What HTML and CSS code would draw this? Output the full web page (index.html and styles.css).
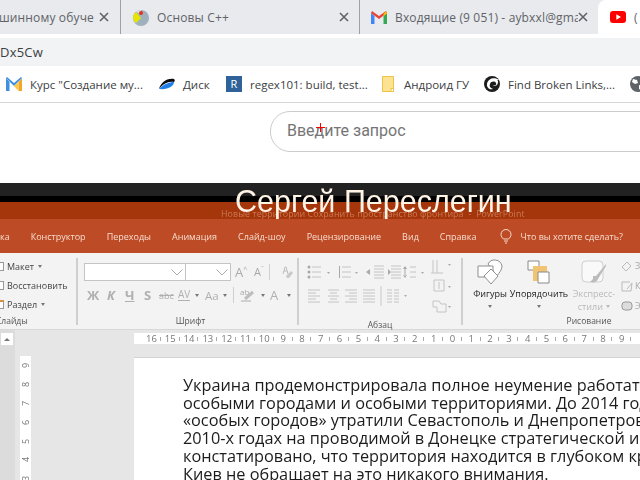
FILE: index.html
```html
<!DOCTYPE html>
<html lang="ru">
<head>
    <meta charset="UTF-8">
    <title>Сергей Переслегин</title>
    <link rel="stylesheet" href="styles.css">
</head>
<body>
<div class="tabstrip">
    <div class="tab tab-first">
        <span class="tab-title">шинному обучен</span>
        <svg class="tab-close" width="10" height="10" viewBox="0 0 10 10"><path d="M1 1l8 8M9 1l-8 8"/></svg>
    </div>
    <div class="tab tab-wide">
        <svg class="fav" width="17" height="17" viewBox="0 0 17 17"><circle cx="9" cy="9" r="8" fill="#9fb1bd"/><path d="M1 9a8 8 0 0 1 3-6l5 6-5 5a8 8 0 0 1-3-5z" fill="#e6e600"/><path d="M4 3a8 8 0 0 1 5-2v4z" fill="#dfe3e6"/><circle cx="9" cy="4" r="2" fill="#e8331c"/></svg>
        <span class="tab-title">Основы С++</span>
        <svg class="tab-close" width="10" height="10" viewBox="0 0 10 10"><path d="M1 1l8 8M9 1l-8 8"/></svg>
    </div>
    <div class="tab tab-wide tab-mail">
        <svg class="fav" width="16" height="13" viewBox="0 0 16 13"><path d="M0 2v11h3.500V5z" fill="#4285f4"/><path d="M12.500 13H16V2l-3.500 3z" fill="#34a853"/><path d="M0 2l8 6 8-6-1-2-7 5-7-5z" fill="#ea4335"/><path d="M12.500 3v2L16 2.500 15 0z" fill="#fbbc04"/></svg>
        <span class="tab-title">Входящие (9 051) - aybxxl@gmai</span>
        <svg class="tab-close" width="10" height="10" viewBox="0 0 10 10"><path d="M1 1l8 8M9 1l-8 8"/></svg>
    </div>
    <div class="tab-active">
        <svg width="16" height="12" viewBox="0 0 16 12"><rect width="16" height="12" rx="3" fill="#f00"/><path d="M6.300 3.300v5.400L11 6z" fill="#fff"/></svg>
        <span class="tab-title">(</span>
    </div>
</div>
<div class="toolbar">
    <div class="omnibox">Dx5Cw</div>
</div>
<div class="bookmarks">
    <div class="bookmark bm-kurs">
        <svg width="16" height="14" viewBox="0 0 16 14"><path d="M0 1v13h3.500V5z" fill="#3d8fe0"/><path d="M12.500 14H16V1l-3.500 4z" fill="#f5a623"/><path d="M0 1l1-1 7 6 7-6 1 1-8 8z" fill="#3d8fe0"/><path d="M8 9l4.500-4v9z" fill="#f9c84a"/></svg>
        <span>Курс "Создание му...</span>
    </div>
    <div class="bookmark bm-disk">
        <svg width="16" height="12" viewBox="0 0 16 12"><path d="M0 11C2 5 7 0 15 1c1 1 1 2 0 3C9 3 4 6 0 11z" fill="#0b0b12"/><path d="M0 11C5 6 10 4 15 4c0 4-6 8-15 7z" fill="#1f7fe8"/></svg>
        <span>Диск</span>
    </div>
    <div class="bookmark bm-regex">
        <span class="r-icon">R</span>
        <span>regex101: build, test...</span>
    </div>
    <div class="bookmark bm-android">
        <svg width="12" height="16" viewBox="0 0 12 16"><path d="M.5.500h11v15H.5z" fill="#fde293" stroke="#eac545"/><path d="M9 12.500h2.500v3H9z" fill="#fff" stroke="#eac545"/></svg>
        <span>Андроид ГУ</span>
    </div>
    <div class="bookmark bm-links">
        <svg width="16" height="16" viewBox="0 0 16 16"><circle cx="8" cy="8" r="8" fill="#1c1c1c"/><path d="M15 4C11 1 4 2 3 8c-.5 4 3 6 6 5-3-1-4-3-3-5 1-3 5-3 6-1 1 2-1 3-3 2 1 2 5 1 5-3 0-1 0-2-1-2z" fill="#fff"/></svg>
        <span>Find Broken Links,...</span>
    </div>
    <svg class="bm-globe" width="16" height="16" viewBox="0 0 16 16"><circle cx="8" cy="8" r="8" fill="#5f6368"/><path d="M3 3l4 1 1 3-3 1-3-2zM9 9l4 1-2 4-2-1z" fill="#fff"/></svg>
</div>
<div class="page">
    <div class="search">
        <span>Введите запрос</span>
        <span class="cursor"></span>
    </div>
</div>
<div class="video">
    <div class="band-dark"></div>
    <div class="band-black"></div>
    <div class="band-title">Новые территории Сохранить пространство фронтира &nbsp;-&nbsp; PowerPoint</div>
    <div class="menu">
        <span class="menu-cut">ка</span>
        <span>Конструктор</span>
        <span>Переходы</span>
        <span>Анимация</span>
        <span>Слайд-шоу</span>
        <span>Рецензирование</span>
        <span>Вид</span>
        <span>Справка</span>
        <svg class="bulb" width="12" height="15" viewBox="0 0 12 15"><path d="M3.500 10C2 8.500 1 7.500 1 5.500a5 5 0 0 1 10 0C11 7.500 10 8.500 8.500 10zM4 12h4M5 14h2" fill="none" stroke="#f6dccf"/></svg>
        <span class="menu-ask">Что вы хотите сделать?</span>
    </div>
    <div class="ribbon">
        <div class="group group-slides">
            <div class="group-body slide-rows">
                <div class="slide-row"><i></i>Макет<b class="caret"></b></div>
                <div class="slide-row"><i></i>Восстановить</div>
                <div class="slide-row"><i class="orange"></i>Раздел<b class="caret"></b></div>
            </div>
            <div class="group-label label-cut">Слайды</div>
        </div>
        <div class="group group-font">
            <div class="group-body">
                <div class="font-top">
                    <div class="combo combo-name"><svg width="12" height="7" viewBox="0 0 12 7"><path d="M.5.500L6 6l5.500-5.500"/></svg></div>
                    <div class="combo combo-size"><svg width="12" height="7" viewBox="0 0 12 7"><path d="M.5.500L6 6l5.500-5.500"/></svg></div>
                    <span class="big-a">A<sup>^</sup></span>
                    <span class="small-a">A<sup>ˇ</sup></span>
                    <span class="vsep"></span>
                    <svg class="eraser" width="12" height="13" viewBox="0 0 12 13"><path d="M2 8l2-7h1l2 7M3 5h3" fill="none" stroke="#bdbdbd"/><path d="M5 10l5-5 2 2-4 5H6z" fill="#c9c9c9"/></svg>
                </div>
                <div class="font-bottom">
                    <span class="fmt-b">Ж</span>
                    <span class="fmt-b fmt-i">К</span>
                    <span class="fmt-b fmt-u">Ч</span>
                    <span class="fmt-b">S</span>
                    <span class="fmt-s">abc</span>
                    <span class="fmt-av">AV</span>
                    <b class="caret"></b>
                    <span class="fmt-a">Aa</span>
                    <b class="caret"></b>
                    <span class="vsep"></span>
                    <svg width="14" height="14" viewBox="0 0 14 14"><text class="pen-text" x="0" y="7">ab</text><path d="M1 13h10" stroke="#d0d0d0" stroke-width="2"/><path d="M5 11l8-7" stroke="#bdbdbd" stroke-width="3"/></svg>
                    <b class="caret"></b>
                    <span class="fmt-a fmt-color">A</span>
                    <b class="caret"></b>
                </div>
            </div>
            <div class="group-label">Шрифт</div>
        </div>
        <div class="group group-para">
            <div class="group-body">
                <svg class="para-icons" width="162" height="60" viewBox="0 0 162 60">
                    <g class="ln">
                        <path d="M13 9h9M13 14h9M13 19h9M43 9h9M43 14h9M43 19h9M75 8h10M75 11h10M75 14h10M75 17h10M75 20h10M92 8h10M92 11h10M92 14h10M92 17h10M92 20h10M111 9h6M111 14h6M111 19h6"/>
                        <path d="M9 32h12M9 35h8M9 38h12M9 41h8M9 44h12M29 32h11M31 35h7M29 38h11M31 41h7M29 44h11M46 32h12M50 35h8M46 38h12M50 41h8M46 44h12M64 32h12M64 35h12M64 38h12M64 41h12M64 44h12M88 32h5M88 35h5M88 38h5M88 41h5M88 44h5M95 32h5M95 35h5M95 38h5M95 41h5M95 44h5"/>
                        <path d="M82 28v20" stroke="#c8c8c8"/>
                        <path d="M134 2v13M138 2v13M132 15h12M135 22h10v11h-10zM140 24v7"/>
                        <path d="M134 43h6l2 3h5v8h-9v-5h-4z"/>
                    </g>
                    <g class="dot">
                        <circle cx="10" cy="9" r="1.500"/><circle cx="10" cy="14" r="1.500"/><circle cx="10" cy="19" r="1.500"/>
                        <path d="M40 8h1v12h-1zM67 14l4-3v6zM89 11l3 3-3 3zM106 8l2 3h-4zM106 20l2-3h-4zM105.500 10h1v8h-1z"/>
                    </g>
                    <g class="caret-svg">
                        <path d="M28 14h3l-1.500 2zM56 14h3l-1.500 2zM122 14h3l-1.500 2zM105 37h3l-1.500 2zM149 6h3l-1.500 2zM149 28h3l-1.500 2zM149 48h3l-1.500 2z"/>
                    </g>
                </svg>
            </div>
            <div class="group-label">Абзац</div>
        </div>
        <div class="group group-draw">
            <div class="group-body draw-row">
                <div class="big-btn btn-shapes">
                    <svg width="26" height="26" viewBox="0 0 26 26"><path d="M11 5a7.500 7.500 0 0 1 14 2c0 4-3 7-5 10l-3-4z" fill="#fff" stroke="#8f8f8f"/><path d="M1 7h15v11H1z" fill="#fff" stroke="#8f8f8f"/><path d="M14 10l7 7-7 8-7-8z" fill="#fff" stroke="#8f8f8f"/></svg>
                    <span>Фигуры</span><b class="caret"></b>
                </div>
                <div class="big-btn btn-order">
                    <svg width="24" height="24" viewBox="0 0 24 24"><path d="M1 1h11v9H1z" fill="#fff" stroke="#8a8a8a"/><path d="M6 6h14v15H6z" fill="#f0c473"/><path d="M11 12h11v11H11z" fill="#fff" stroke="#8a8a8a"/></svg>
                    <span>Упорядочить</span><b class="caret"></b>
                </div>
                <div class="big-btn btn-styles">
                    <svg width="26" height="26" viewBox="0 0 26 26"><rect x="1" y="2" width="21" height="21" rx="4" fill="#f9f9f9" stroke="#cfcfcf"/><path d="M25 5L15 17l-3 0 0 3-3 3c4 1 7 0 8-3l8-13z" fill="#bcbcbc"/></svg>
                    <span>Экспресс-<br>стили <b class="caret"></b></span>
                </div>
                <div class="draw-small">
                    <div><svg width="12" height="12" viewBox="0 0 12 12"><path d="M1 7l5-5 4 4-5 5z" fill="none" stroke="#bbb"/></svg><span>Заливка фигуры</span></div>
                    <div><svg width="12" height="12" viewBox="0 0 12 12"><path d="M1 2h8M1 2v9h9l1-8-5 6" fill="none" stroke="#bbb"/></svg><span>Контур фигуры</span></div>
                    <div><svg width="12" height="12" viewBox="0 0 12 12"><rect x="1" y="2" width="10" height="8" rx="3" fill="#ddd" stroke="#999"/></svg><span>Эффекты</span></div>
                </div>
            </div>
            <div class="group-label">Рисование</div>
        </div>
    </div>
    <div class="workspace">
        <div class="scroll"><span class="scroll-up"></span></div>
        <div class="v-ruler-col">
            <div class="v-ruler">
                <span>9</span><span>8</span><span>7</span><span>6</span><span>5</span><span>4</span><span>3</span>
            </div>
        </div>
        <div class="sheet-col">
            <div class="h-ruler">
                <span>16</span><span>15</span><span>14</span><span>13</span><span>12</span><span>11</span><span>10</span><span>9</span><span>8</span><span>7</span><span>6</span><span>5</span><span>4</span><span>3</span><span>2</span><span>1</span><span>0</span><span>1</span><span>2</span><span>3</span><span>4</span><span>5</span><span>6</span><span>7</span><span>8</span><span>9</span>
            </div>
            <div class="sheet">
                <p>Украина продемонстрировала полное неумение работать</p>
                <p>особыми городами и особыми территориями. До 2014 года</p>
                <p>«особых городов» утратили Севастополь и Днепропетровск</p>
                <p>2010-х годах на проводимой в Донецке стратегической игре</p>
                <p>констатировано, что территория находится в глубоком кризисе</p>
                <p>Киев не обращает на это никакого внимания.</p>
            </div>
        </div>
    </div>
    <div class="video-title">Сергей Переслегин</div>
</div>
</body>
</html>
```

FILE: styles.css
```css
*{
    margin:0;
    padding:0;
    box-sizing:border-box;
}
html,body{
    width:640px;
    height:480px;
    overflow:hidden;
    background:#fff;
}
body{
    font-family:"Open Sans","Noto Sans",sans-serif;
}
svg{
    display:block;
    flex:none;
}

/* browser */
.tabstrip{
    display:flex;
    height:34px;
    background:#e8eaed;
}
.tab{
    display:flex;
    flex:none;
    align-items:center;
    height:34px;
    font-size:12px;
    letter-spacing:.15px;
    color:#5f6368;
    border-right:1px solid #9da0a5;
    white-space:nowrap;
}
.tab-title{
    flex:1;
    overflow:hidden;
}
.tab-close{
    fill:none;
    stroke:#5f6368;
    stroke-width:1.600;
}
.tab-first{
    width:122px;
    padding-right:11px;
    margin-left:-1px;
}
.tab-first .tab-close{
    margin-left:5px;
}
.tab-wide{
    width:239px;
    padding:0 10px 0 11px;
}
.tab-wide .fav{
    margin-right:8px;
}
.tab-mail{
    border-right:0;
    width:238px;
}
.tab-active{
    display:flex;
    align-items:center;
    gap:8px;
    flex:1;
    padding:0 0 0 12px;
    background:#fff;
    border-radius:8px 0 0 0;
    font-size:12px;
    color:#5f6368;
}
.toolbar{
    height:32px;
    padding-top:4px;
    background:#fff;
}
.omnibox{
    height:28px;
    line-height:28px;
    background:#f1f3f4;
    font-size:13px;
    letter-spacing:.2px;
    color:#3c4043;
}
.bookmarks{
    display:flex;
    align-items:center;
    height:37px;
    padding-left:6px;
    background:#fff;
    border-bottom:1px solid #d6d6d6;
    font-size:11.500px;
    color:#3c4043;
    white-space:nowrap;
}
.bookmark{
    display:flex;
    flex:none;
    align-items:center;
    gap:8px;
}
.bm-kurs{
    width:153px;
}
.bm-disk{
    width:67px;
}
.bm-regex{
    width:156px;
}
.bm-android{
    width:102px;
    gap:10px;
}
.bm-links{
    width:146px;
}
.r-icon{
    width:16px;
    height:16px;
    line-height:16px;
    text-align:center;
    background:#2f6299;
    color:#fff;
    font-size:11px;
}
.page{
    height:80px;
    padding:8px 0 0 270px;
    background:#fff;
}
.search{
    position:relative;
    width:400px;
    height:41px;
    line-height:37px;
    padding-left:16px;
    border:1px solid #ccc;
    border-radius:20px;
    font-family:Roboto,sans-serif;
    font-size:16px;
    color:#757575;
}
.cursor{
    position:absolute;
    left:45px;
    top:11px;
    width:9px;
    height:9px;
    background:linear-gradient(#f00,#f00) 0 4px/9px 1px no-repeat,linear-gradient(#f00,#f00) 4px 0/1px 9px no-repeat;
}

/* video */
.video{
    position:relative;
    height:297px;
    overflow:hidden;
    background:#e6e6e6;
    filter:blur(.35px);
}
.band-dark{
    height:13px;
    background:#222;
}
.band-black{
    height:6px;
    background:#000;
}
.band-title{
    height:17px;
    padding:7px 0 0 221px;
    background:#a5350a;
    font-size:8.800px;
    line-height:11px;
    letter-spacing:.12px;
    color:#c97a55;
    white-space:nowrap;
}
.video-title{
    position:absolute;
    left:235px;
    top:-1px;
    font-family:"Liberation Sans",Arial,sans-serif;
    font-size:30.500px;
    line-height:38px;
    color:#fff3e6;
    white-space:nowrap;
}
.menu{
    display:flex;
    align-items:center;
    gap:21px;
    height:34px;
    background:#bd4b25;
    font-size:9px;
    color:#f6dccf;
    white-space:nowrap;
}
.bulb{
    margin-left:3px;
}
.menu-ask{
    margin-left:-13px;
}

/* ribbon */
.ribbon{
    display:flex;
    height:77px;
    padding:5px 0 4px;
    background:#f3f3f3;
    border-bottom:1px solid #d8d8d8;
    color:#444;
    font-size:9px;
    white-space:nowrap;
}
.group{
    display:flex;
    flex:none;
    flex-direction:column;
    border-right:2px solid #cfcfcf;
}
.group-body{
    flex:1;
}
.group-label{
    height:14px;
    margin-bottom:-3px;
    line-height:14px;
    text-align:center;
    font-size:8.500px;
    color:#555;
}
.label-cut{
    text-align:left;
    margin-left:-4px;
}
.group-slides{
    width:78px;
}
.slide-rows{
    display:flex;
    flex-direction:column;
    gap:3px;
}
.slide-row{
    display:flex;
    align-items:center;
    height:16px;
}
.slide-row i{
    width:4px;
    height:9px;
    margin-right:3px;
    background:#fff;
    border:1px solid #999;
    border-left:0;
}
.slide-row i.orange{
    border-top:2px solid #d9913f;
}
.caret{
    display:inline-block;
    width:0;
    height:0;
    margin-left:4px;
    border:2px solid transparent;
    border-top:3px solid #777;
    border-bottom:0;
}
.group-font{
    width:221px;
    padding-left:6px;
}
.font-top{
    display:flex;
    align-items:center;
    height:18px;
    margin-top:5px;
}
.combo{
    display:flex;
    align-items:center;
    justify-content:flex-end;
    height:18px;
    padding-right:2px;
    background:#fff;
    border:1px solid #c4c4c4;
}
.combo svg{
    fill:none;
    stroke:#aaa;
}
.combo-name{
    width:102px;
}
.combo-size{
    width:46px;
    margin-left:-1px;
}
.big-a,.small-a{
    color:#aaa;
    font-size:13px;
    line-height:18px;
}
.big-a{
    width:19px;
    margin-left:4px;
}
.small-a{
    width:15px;
    font-size:11px;
}
.big-a sup,.small-a sup{
    font-size:7px;
    line-height:0;
}
.vsep{
    flex:none;
    display:block;
    width:1px;
    height:16px;
    background:#d0d0d0;
}
.eraser{
    margin-left:11px;
}
.font-bottom{
    display:grid;
    grid-template-columns:20px 18px 19px 15px 19px 15px 12px 16px 12px 7px 19px 11px 15px 10px;
    align-items:center;
    justify-items:start;
    height:20px;
    margin:4px 0 0 3px;
    color:#b0b0b0;
}
.font-bottom .caret{
    margin-left:2px;
}
.fmt-b{
    font-size:13px;
    font-weight:700;
}
.fmt-i{
    font-style:italic;
}
.fmt-u{
    text-decoration:underline;
}
.fmt-s{
    font-size:9px;
    text-decoration:line-through;
}
.fmt-av{
    font-size:10px;
    border-bottom:1px solid #b0b0b0;
    line-height:11px;
}
.fmt-a{
    font-size:11.500px;
}
.fmt-color{
    font-size:13px;
}
.pen-text{
    font-size:8px;
    fill:#aaa;
}
.group-para{
    width:164px;
}
.ln{
    fill:none;
    stroke:#c4c4c4;
}
.dot{
    fill:#a8a8a8;
}
.caret-svg{
    fill:#aaa;
}
.group-draw{
    width:252px;
    border-right:0;
}
.draw-row{
    display:flex;
    padding-left:9px;
}
.big-btn{
    display:flex;
    flex:none;
    flex-direction:column;
    align-items:center;
    line-height:13px;
    color:#222;
}
.big-btn svg{
    height:26px;
    margin:1px 0 2px;
}
.big-btn .caret{
    margin:5px 0 0;
}
.btn-shapes{
    width:36px;
}
.btn-order{
    width:60px;
    margin-left:1px;
}
.btn-styles{
    width:46px;
    margin-left:2px;
    text-align:center;
    color:#b9b9b9;
}
.btn-styles .caret{
    margin:0 0 2px 1px;
    border-top-color:#b9b9b9;
}
.draw-small{
    display:flex;
    flex-direction:column;
    gap:5px;
    margin-left:4px;
    color:#a8a8a8;
    font-size:9px;
}
.draw-small div{
    display:flex;
    flex:none;
    align-items:center;
    gap:2px;
    height:15px;
}

/* editor */
.workspace{
    display:flex;
    height:150px;
}
.scroll{
    flex:none;
    width:15px;
    padding:3px 0 0 1px;
    background:#dcdcdc;
}
.scroll-up{
    display:flex;
    align-items:center;
    justify-content:center;
    width:12px;
    height:12px;
    background:#fff;
}
.scroll-up::before{
    content:"";
    border:3px solid transparent;
    border-bottom:3px solid #777;
    border-top:0;
}
.v-ruler-col{
    flex:none;
    width:119px;
    padding:26px 0 0 5px;
}
.v-ruler{
    display:flex;
    flex-direction:column;
    width:11px;
    height:130px;
    background:#fff;
    font-size:9px;
    color:#777;
}
.v-ruler span{
    flex:none;
    height:18.900px;
    line-height:11px;
    text-align:center;
    writing-mode:vertical-rl;
    transform:rotate(180deg);
}
.sheet-col{
    flex:1;
    min-width:0;
}
.h-ruler{
    display:flex;
    height:11px;
    margin-top:3px;
    padding-left:8px;
    background:#fff;
    font-size:9.500px;
    line-height:11px;
    color:#777;
}
.h-ruler span{
    display:flex;
    flex:none;
    align-items:center;
    justify-content:center;
    position:relative;
    width:18.820px;
}
.h-ruler span::after{
    content:"";
    position:absolute;
    right:0;
    top:4px;
    width:1px;
    height:4px;
    background:#aaa;
}
.sheet{
    height:123px;
    margin-top:13px;
    padding:19px 0 0 49px;
    background:#fff;
    border-top:1px solid #d4d4d4;
    font-size:16.300px;
    line-height:17.700px;
    color:#1c1c1c;
    white-space:nowrap;
    overflow:hidden;
}
```
